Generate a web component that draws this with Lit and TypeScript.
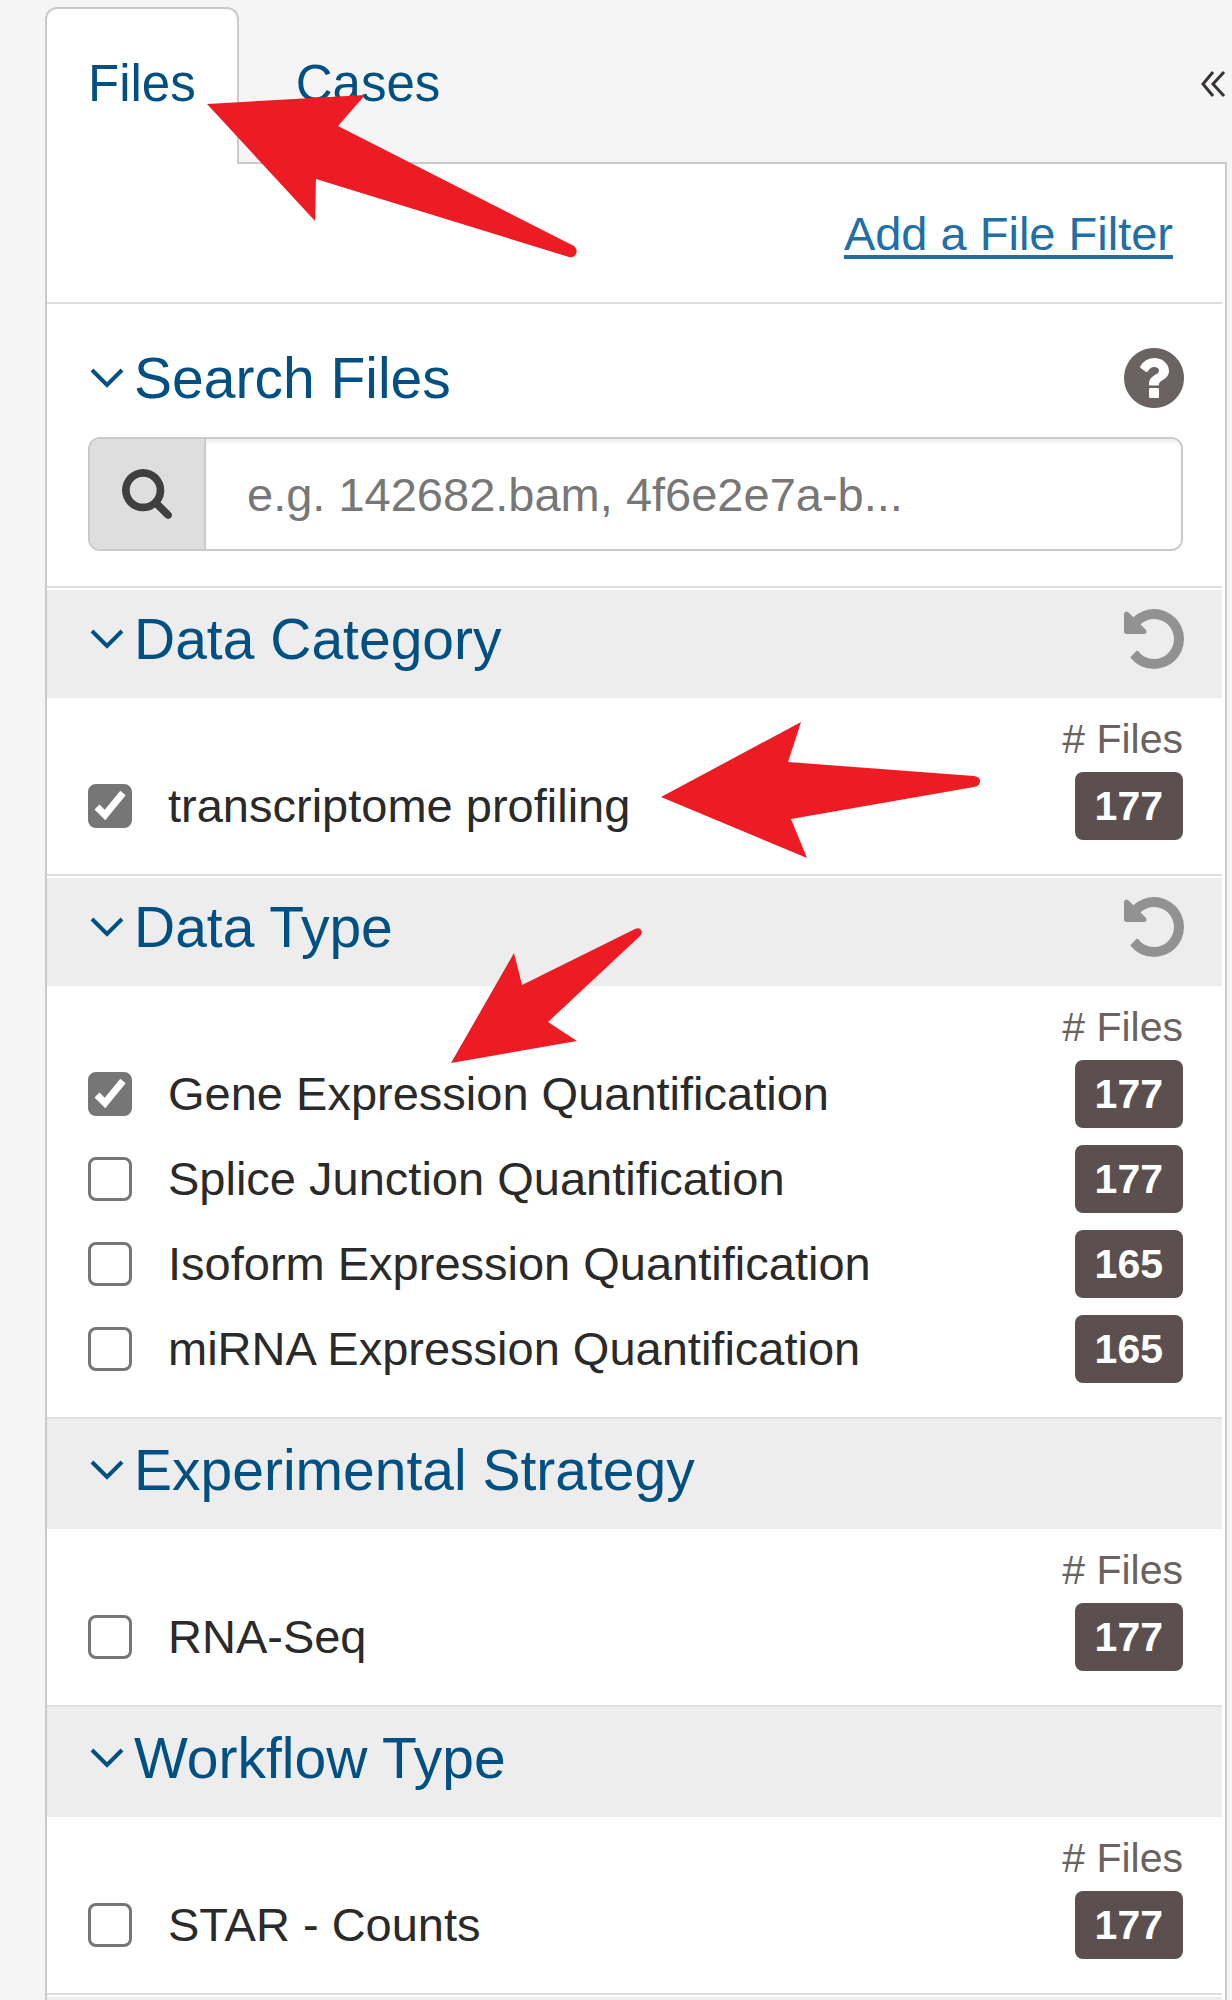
import { LitElement, html, svg, css, nothing } from "lit";
import { customElement, property, state } from "lit/decorators.js";
import { classMap } from "lit/directives/class-map.js";

interface FacetValue {
  label: string;
  count: number;
  checked?: boolean;
}

interface Facet {
  title: string;
  values: FacetValue[];
}

const FACETS: Facet[] = [
  {
    title: "Data Category",
    values: [{ label: "transcriptome profiling", count: 177, checked: true }],
  },
  {
    title: "Data Type",
    values: [
      { label: "Gene Expression Quantification", count: 177, checked: true },
      { label: "Splice Junction Quantification", count: 177 },
      { label: "Isoform Expression Quantification", count: 165 },
      { label: "miRNA Expression Quantification", count: 165 },
    ],
  },
  { title: "Experimental Strategy", values: [{ label: "RNA-Seq", count: 177 }] },
  { title: "Workflow Type", values: [{ label: "STAR - Counts", count: 177 }] },
];

const searchIcon = html`<svg class="icon" viewBox="0 128 1664 1664" aria-hidden="true">
  <path fill="currentColor" d="M1152 832q0-185-131.5-316.5t-316.5-131.5-316.5 131.5-131.5 316.5 131.5 316.5 316.5 131.5 316.5-131.5 131.5-316.5zm512 832q0 52-38 90t-90 38q-54 0-90-38l-343-342q-179 124-399 124-143 0-273.5-55.5t-225-150-150-225-55.5-273.5 55.5-273.5 150-225 225-150 273.5-55.5 273.5 55.5 225 150 150 225 55.5 273.5q0 220-124 399l343 343q37 37 37 90z"/>
</svg>`;

const questionIcon = html`<svg class="icon" viewBox="128 128 1536 1536" aria-hidden="true">
  <path fill="currentColor" d="M1024 1376v-192q0-14-9-23t-23-9h-192q-14 0-23 9t-9 23v192q0 14 9 23t23 9h192q14 0 23-9t9-23zm256-672q0-88-55.5-163t-138.5-116-170-41q-243 0-371 213-15 24 8 42l132 100q7 6 19 6 16 0 25-12 53-68 86-92 34-24 86-24 48 0 85.5 26t37.5 59q0 38-20 61t-68 45q-63 28-115.5 86.5t-52.5 125.5v36q0 14 9 23t23 9h192q14 0 23-9t9-23q0-19 21.5-49.5t54.5-49.5q32-18 49-28.5t46-35 44.5-48 28-60.5 12.5-81zm384 192q0 209-103 385.5t-279.5 279.5-385.5 103-385.5-103-279.5-279.5-103-385.5 103-385.5 279.5-279.5 385.5-103 385.5 103 279.5 279.5 103 385.5z"/>
</svg>`;

const undoIcon = html`<svg class="icon" viewBox="128 128 1536 1536" aria-hidden="true">
  <path fill="currentColor" d="M1664 896q0 156-61 298t-164 245-245 164-298 61q-172 0-327-72.5t-264-204.5q-7-10-6.5-22.5t8.5-20.5l137-138q10-9 25-9 16 2 23 12 73 95 179 147t225 52q104 0 198.5-40.5t163.5-109.5 109.5-163.5 40.5-198.5-40.5-198.5-109.5-163.5-163.5-109.5-198.5-40.5q-98 0-188 35.5t-160 101.5l137 138q31 30 14 69-17 40-59 40h-448q-26 0-45-19t-19-45v-448q0-42 40-59 39-17 69 14l130 129q107-101 244.5-156.5t284.5-55.5q156 0 298 61t245 164 164 245 61 298z"/>
</svg>`;

const chevronIcon = html`<svg class="chevron" viewBox="0 0 46 24" aria-hidden="true">
  <path d="M4 4 L19 19 L34 4" fill="none" stroke="currentColor" stroke-width="4"/>
</svg>`;

const base = css`
  * { box-sizing: border-box; }
  button {
    margin: 0;
    padding: 0;
    border: 0;
    background: none;
    font: inherit;
    color: inherit;
    cursor: pointer;
  }
  .icon { display: block; width: 100%; height: 100%; }
  .header {
    display: flex;
    align-items: center;
    justify-content: space-between;
    padding: 16px 38px 26px 41px;
  }
  .title {
    display: flex;
    align-items: center;
    margin: 0;
    font-size: 57px;
    line-height: 66px;
    font-weight: 400;
    color: #005083;
  }
  .title button { display: flex; align-items: center; }
  .chevron { width: 46px; height: 24px; flex: none; }
  .action { width: 60px; height: 60px; flex: none; }
`;

@customElement("facet-section")
class FacetSection extends LitElement {
  static styles = [
    base,
    css`
      :host { display: block; border-top: 2px solid #dedede; }
      .header { background: #ededed; border-top: 2px solid #ededed; }
      .header.active { border-top-color: #fff; }
      .action { color: #929292; }
      .body { padding: 18px 39px 26px 41px; }
      .caption {
        font-size: 41px;
        line-height: 47px;
        text-align: right;
        color: #6b6262;
      }
      .list { list-style: none; margin: 0; padding: 0; }
      .row {
        display: flex;
        align-items: center;
        justify-content: space-between;
        height: 85px;
      }
      .choice {
        display: flex;
        align-items: center;
        gap: 36px;
        font-size: 47px;
        color: #2a2a2a;
        cursor: pointer;
      }
      .tick { display: grid; width: 44px; height: 44px; flex: none; }
      .tick > * { grid-area: 1 / 1; }
      .box {
        appearance: none;
        margin: 0;
        width: 44px;
        height: 44px;
        border: 3px solid #767676;
        border-radius: 8px;
        background: #fff;
      }
      .box:checked { background: #767676; }
      .mark { pointer-events: none; }
      .badge {
        padding: 0 20px;
        border-radius: 8px;
        background: #5b504f;
        color: #fff;
        font-size: 41px;
        line-height: 68px;
        font-weight: 700;
      }
    `,
  ];

  @property({ attribute: false }) facet!: Facet;
  @state() private open = true;
  @state() private picked = new Set<string>();

  willUpdate(changed: Map<string, unknown>) {
    if (changed.has("facet")) {
      this.picked = new Set(this.facet.values.filter((v) => v.checked).map((v) => v.label));
    }
  }

  private toggle(label: string) {
    const next = new Set(this.picked);
    if (!next.delete(label)) next.add(label);
    this.picked = next;
  }

  private row(value: FacetValue, index: number) {
    const on = this.picked.has(value.label);
    return html`<li class="row">
      <label class="choice" for="v${index}">
        <span class="tick">
          <input class="box" type="checkbox" id="v${index}" .checked=${on}
            @change=${() => this.toggle(value.label)} />
          ${on
            ? html`<svg class="mark" viewBox="0 0 44 44" aria-hidden="true">
                <path d="M9 23 L17 31 L35 9" fill="none" stroke="#fff" stroke-width="7"/>
              </svg>`
            : nothing}
        </span>
        <span>${value.label}</span>
      </label>
      <span class="badge">${value.count}</span>
    </li>`;
  }

  render() {
    const active = this.picked.size > 0;
    return html`
      <div class=${classMap({ header: true, active })}>
        <h2 class="title">
          <button aria-expanded=${this.open} @click=${() => (this.open = !this.open)}>
            ${chevronIcon}${this.facet.title}
          </button>
        </h2>
        ${active
          ? html`<button class="action" aria-label="Reset" @click=${() => (this.picked = new Set())}>
              ${undoIcon}
            </button>`
          : nothing}
      </div>
      ${this.open
        ? html`<div class="body">
            <div class="caption"># Files</div>
            <ul class="list">${this.facet.values.map((v, i) => this.row(v, i))}</ul>
          </div>`
        : nothing}
    `;
  }
}

@customElement("app-root")
class AppRoot extends LitElement {
  static styles = [
    base,
    css`
      :host { display: block; }
      .page {
        position: relative;
        display: flex;
        flex-direction: column;
        min-height: 100vh;
        padding: 7px 5px 0 45px;
        overflow: hidden;
        background: #f5f5f5;
        font-family: "Liberation Sans", Arial, sans-serif;
      }
      .bar {
        display: flex;
        align-items: flex-start;
        justify-content: space-between;
      }
      .tabs { display: flex; gap: 14px; }
      .tab {
        margin-bottom: -2px;
        padding: 46px 41px 51px;
        border: 2px solid transparent;
        border-bottom: 0;
        border-radius: 12px 12px 0 0;
        font-size: 51px;
        line-height: 58px;
        color: #005083;
      }
      .tab.selected {
        position: relative;
        border-color: #cacaca;
        background: #fff;
        z-index: 1;
      }
      .collapse { width: 26px; height: 28px; margin-top: 63px; color: #3a3335; }
      .panel {
        flex: 1;
        display: flex;
        flex-direction: column;
        padding-right: 3px;
        border: 2px solid #cacaca;
        border-bottom: 0;
        background: #fff;
      }
      .add {
        display: flex;
        align-items: center;
        justify-content: flex-end;
        height: 138px;
        padding-right: 49px;
        font-size: 47px;
      }
      .link {
        color: #226ea6;
        text-decoration: underline;
        text-decoration-thickness: 4px;
        text-underline-offset: 5px;
      }
      .search { border-top: 2px solid #dedede; padding: 25px 0 35px; }
      .help { color: #6b6262; }
      .field {
        display: flex;
        height: 114px;
        margin: 0 39px 0 41px;
        border: 2px solid #cacaca;
        border-radius: 12px;
        overflow: hidden;
      }
      .addon {
        display: grid;
        place-items: center;
        flex: none;
        width: 116px;
        border-right: 2px solid #cacaca;
        background: #dedede;
        color: #3f3f3f;
      }
      .addon .icon { width: 50px; height: 50px; }
      .text {
        flex: 1;
        min-width: 0;
        padding: 0 41px;
        border: 0;
        outline: 0;
        background: #fff;
        box-shadow: inset 0 4px 3px #f0f0f0;
        font-family: inherit;
        font-size: 47px;
        color: #2a2a2a;
      }
      .text::placeholder { color: #777; opacity: 1; }
      .rest { flex: 1; border-top: 2px solid #dedede; padding-top: 2px; display: flex; }
      .rest-fill { flex: 1; background: #ededed; }
      .pointer { position: absolute; z-index: 2; fill: #ed1c24; pointer-events: none; }
      .to-tab { left: 200px; top: 90px; width: 380px; height: 172px; }
      .to-category { left: 655px; top: 716px; width: 330px; height: 146px; }
      .to-type { left: 446px; top: 920px; width: 200px; height: 146px; }
    `,
  ];

  @state() private tab = "Files";
  @state() private searchOpen = true;

  render() {
    return html`
      <main class="page">
        <div class="bar">
          <div class="tabs" role="tablist">
            ${["Files", "Cases"].map(
              (name) => html`<button
                role="tab"
                aria-selected=${this.tab === name}
                class=${classMap({ tab: true, selected: this.tab === name })}
                @click=${() => (this.tab = name)}
              >${name}</button>`,
            )}
          </div>
          <button class="collapse" aria-label="Collapse filters">
            <svg class="icon" viewBox="0 0 26 28" aria-hidden="true">
              <path d="M12 2 L2 14 L12 26 M23 2 L12 14 L23 26" fill="none" stroke="currentColor" stroke-width="3"/>
            </svg>
          </button>
        </div>
        <div class="panel">
          <div class="add"><a class="link" href="#add-filter">Add a File Filter</a></div>
          <section class="search">
            <div class="header">
              <h2 class="title">
                <button
                  aria-label="Toggle search"
                  aria-expanded=${this.searchOpen}
                  @click=${() => (this.searchOpen = !this.searchOpen)}
                >${chevronIcon}</button><label for="search">Search Files</label>
              </h2>
              <button class="action help" aria-label="Help">${questionIcon}</button>
            </div>
            ${this.searchOpen
              ? html`<div class="field">
                  <span class="addon">${searchIcon}</span>
                  <input class="text" id="search" type="text" placeholder="e.g. 142682.bam, 4f6e2e7a-b..." />
                </div>`
              : nothing}
          </section>
          ${FACETS.map((f) => html`<facet-section .facet=${f}></facet-section>`)}
          <div class="rest"><div class="rest-fill"></div></div>
        </div>

        <svg class="pointer to-tab" viewBox="200 90 380 172" aria-hidden="true">
          ${svg`<path d="M207 104 L365 95 L338 126 L574 246 Q578 250 576 254 Q574 258 569 257 L316 179 L315 221 Z"/>`}
        </svg>
        <svg class="pointer to-category" viewBox="655 716 330 146" aria-hidden="true">
          ${svg`<path d="M661 797 L801 722 L788 762 L974 776 Q980 777 980 781 Q980 786 974 787 L791 819 L807 858 Z"/>`}
        </svg>
        <svg class="pointer to-type" viewBox="446 920 200 146" aria-hidden="true">
          ${svg`<path d="M451 1063 L514 953 L522 985 L635 929 Q639 927 641 930 Q643 933 640 936 L548 1022 L577 1041 Z"/>`}
        </svg>
      </main>
    `;
  }
}
